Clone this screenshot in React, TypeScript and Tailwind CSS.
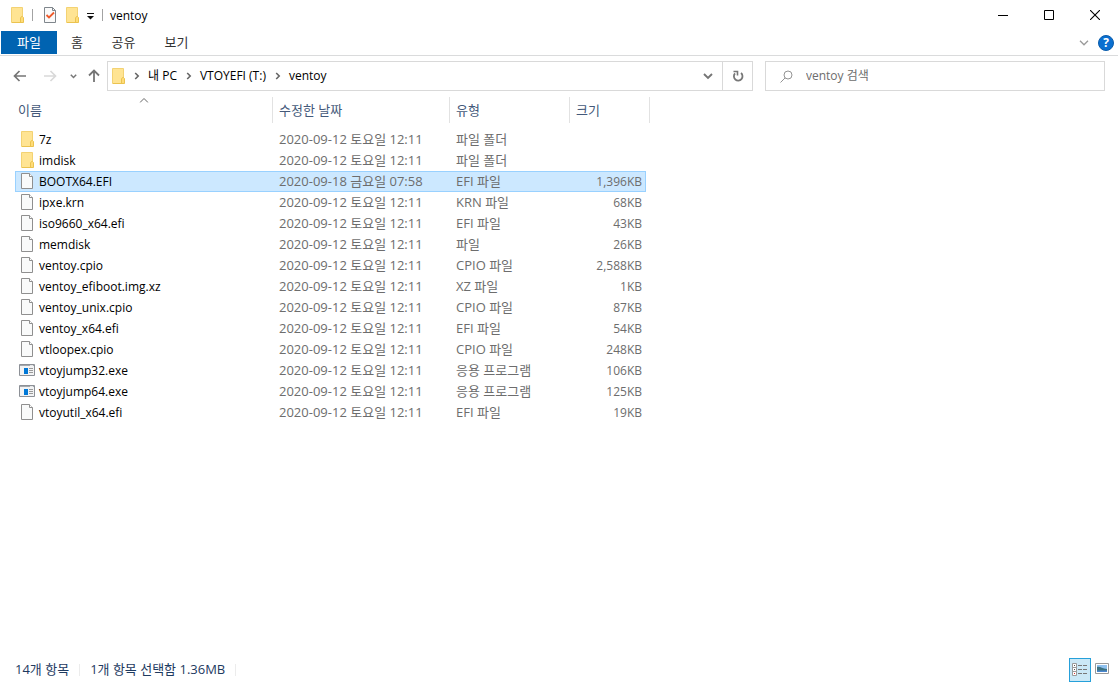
type FileKind = "folder" | "file" | "exe";

type Entry = {
  name: string;
  kind: FileKind;
  date: string;
  type: string;
  size?: string;
  selected?: boolean;
};

const DEFAULT_DATE = "2020-09-12 토요일 12:11";

const entries: Entry[] = [
  { name: "7z", kind: "folder", date: DEFAULT_DATE, type: "파일 폴더" },
  { name: "imdisk", kind: "folder", date: DEFAULT_DATE, type: "파일 폴더" },
  {
    name: "BOOTX64.EFI",
    kind: "file",
    date: "2020-09-18 금요일 07:58",
    type: "EFI 파일",
    size: "1,396KB",
    selected: true,
  },
  { name: "ipxe.krn", kind: "file", date: DEFAULT_DATE, type: "KRN 파일", size: "68KB" },
  { name: "iso9660_x64.efi", kind: "file", date: DEFAULT_DATE, type: "EFI 파일", size: "43KB" },
  { name: "memdisk", kind: "file", date: DEFAULT_DATE, type: "파일", size: "26KB" },
  { name: "ventoy.cpio", kind: "file", date: DEFAULT_DATE, type: "CPIO 파일", size: "2,588KB" },
  { name: "ventoy_efiboot.img.xz", kind: "file", date: DEFAULT_DATE, type: "XZ 파일", size: "1KB" },
  { name: "ventoy_unix.cpio", kind: "file", date: DEFAULT_DATE, type: "CPIO 파일", size: "87KB" },
  { name: "ventoy_x64.efi", kind: "file", date: DEFAULT_DATE, type: "EFI 파일", size: "54KB" },
  { name: "vtloopex.cpio", kind: "file", date: DEFAULT_DATE, type: "CPIO 파일", size: "248KB" },
  { name: "vtoyjump32.exe", kind: "exe", date: DEFAULT_DATE, type: "응용 프로그램", size: "106KB" },
  { name: "vtoyjump64.exe", kind: "exe", date: DEFAULT_DATE, type: "응용 프로그램", size: "125KB" },
  { name: "vtoyutil_x64.efi", kind: "file", date: DEFAULT_DATE, type: "EFI 파일", size: "19KB" },
];

function FolderIcon() {
  return (
    <svg width="16" height="16" viewBox="0 0 16 16" className="mb-px shrink-0" aria-hidden="true">
      <path d="M2.5 0.5h11v15h-11z" fill="#ffe493" stroke="#f3d273" />
      <path d="M3 15.5h11.5v-5l-1-1h-1l-1 1.5v4" fill="#ffdc78" stroke="#ebc34f" />
    </svg>
  );
}

function FileIcon() {
  return (
    <svg width="16" height="16" viewBox="0 0 16 16" className="mb-px shrink-0" aria-hidden="true">
      <path d="M2.5 0.5h8l3 3v12h-11z" fill="#f9fafa" stroke="#8f8f8f" />
      <path d="M10.5 0.5v3h3" fill="#fff" stroke="#8f8f8f" />
    </svg>
  );
}

function ExeIcon() {
  return (
    <svg width="16" height="16" viewBox="0 0 16 16" className="mb-px shrink-0" aria-hidden="true">
      <path d="M0.5 2.5h15v11H0.5z" fill="#f2f3f4" stroke="#8c9096" />
      <path d="M1 3h14v1H1z" fill="#a4a8ac" />
      <path d="M5 6h4v6H5z" fill="#0078d7" />
      <path d="M10 6.5h4M10 8.5h4M10 10.5h4" stroke="#9a9a9a" />
      <path d="M11 3.5h3" stroke="#e4e6e8" />
    </svg>
  );
}

function CheckDocIcon() {
  return (
    <svg width="16" height="16" viewBox="0 0 16 16" className="mb-px" aria-hidden="true">
      <path d="M2.5 0.5h8l3 3v12h-11z" fill="#fafafa" stroke="#7f868c" />
      <path d="M10.5 0.5v3h3" fill="none" stroke="#7f868c" />
      <path d="M4.5 8l2.5 2.5 5-5" fill="none" stroke="#ee5a2b" strokeWidth="1.8" />
    </svg>
  );
}

function EntryIcon({ kind }: { kind: FileKind }) {
  if (kind === "folder") return <FolderIcon />;
  if (kind === "exe") return <ExeIcon />;
  return <FileIcon />;
}

function Crumb({ label }: { label: string }) {
  return (
    <li className="flex items-center">
      <svg width="6" height="8" viewBox="0 0 6 8" className="mx-2" aria-hidden="true">
        <path d="M1.2 1l3 3-3 3" fill="none" stroke="#666" strokeWidth="1.6" />
      </svg>
      <button type="button">{label}</button>
    </li>
  );
}

function TitleBar() {
  const windowButton = "grid h-[30px] w-[46px] place-items-center self-start";

  return (
    <header className="flex h-[31px] shrink-0 items-center">
      <div className="flex items-center pl-[9px]">
        <FolderIcon />
        <span className="mb-px ml-[7px] h-3 w-px bg-[#a3a3a3]" />
        <button type="button" aria-label="속성" className="ml-[9px]">
          <CheckDocIcon />
        </button>
        <button type="button" aria-label="새 폴더" className="ml-[6px]">
          <FolderIcon />
        </button>
        <button type="button" aria-label="빠른 실행 도구 모음 사용자 지정" className="ml-[6px]">
          <svg width="9" height="8" viewBox="0 0 9 8" aria-hidden="true">
            <path d="M1 1.5h7" stroke="#111" />
            <path d="M1 4h7L4.5 7.5z" fill="#111" />
          </svg>
        </button>
        <span className="mb-px ml-[7px] h-3 w-px bg-[#a3a3a3]" />
      </div>
      <h1 className="ml-[7px] flex-1">ventoy</h1>
      <button type="button" aria-label="최소화" className={windowButton}>
        <svg width="10" height="10" viewBox="0 0 10 10" aria-hidden="true">
          <path d="M0 5.5h10" stroke="#000" />
        </svg>
      </button>
      <button type="button" aria-label="최대화" className={windowButton}>
        <svg width="10" height="10" viewBox="0 0 10 10" aria-hidden="true">
          <path d="M0.5 0.5h9v9h-9z" fill="none" stroke="#000" />
        </svg>
      </button>
      <button type="button" aria-label="닫기" className={windowButton}>
        <svg width="10" height="10" viewBox="0 0 10 10" aria-hidden="true">
          <path d="M0 0l10 10M10 0L0 10" stroke="#000" strokeWidth="1.1" />
        </svg>
      </button>
    </header>
  );
}

function Ribbon() {
  return (
    <nav className="flex h-[25px] shrink-0 items-start border-b border-[#dadbdc] pl-px text-[13px] text-[#333]">
      <button type="button" className="h-[23px] w-14 bg-[#0063b1] pb-0.5 text-white">
        파일
      </button>
      <button type="button" className="h-[23px] w-10 pb-0.5">
        홈
      </button>
      <button type="button" className="h-[23px] w-[53px] pb-0.5">
        공유
      </button>
      <button type="button" className="h-[23px] w-[53px] pb-0.5">
        보기
      </button>
      <div className="ml-auto flex h-6 items-center gap-[9px] pr-1">
        <button type="button" aria-label="리본 확장">
          <svg width="10" height="6" viewBox="0 0 10 6" aria-hidden="true">
            <path d="M1 0.8l4 4 4-4" fill="none" stroke="#9a9a9a" strokeWidth="1.3" />
          </svg>
        </button>
        <button
          type="button"
          aria-label="도움말"
          className="grid size-4 place-items-center rounded-full border border-[#0b5cab] bg-[#0a6fd0] text-[12px] leading-none font-bold text-white"
        >
          ?
        </button>
      </div>
    </nav>
  );
}

function AddressBar() {
  return (
    <div className="flex shrink-0 items-center px-[13px] pt-[5px]">
      <button type="button" aria-label="뒤로">
        <svg width="14" height="12" viewBox="0 0 14 12" aria-hidden="true">
          <path d="M6.5 1L1.5 6l5 5M1.5 6H13" fill="none" stroke="#757575" strokeWidth="1.7" />
        </svg>
      </button>
      <button type="button" aria-label="앞으로" className="ml-4">
        <svg width="14" height="12" viewBox="0 0 14 12" aria-hidden="true">
          <path d="M7.5 1l5 5-5 5M12.5 6H1" fill="none" stroke="#d9d9d9" strokeWidth="1.7" />
        </svg>
      </button>
      <button type="button" aria-label="최근 위치" className="ml-[13px]">
        <svg width="7" height="5" viewBox="0 0 7 5" aria-hidden="true">
          <path d="M0.8 0.8l2.7 2.7 2.7-2.7" fill="none" stroke="#777" strokeWidth="1.5" />
        </svg>
      </button>
      <button type="button" aria-label="위로" className="ml-[11px]">
        <svg width="12" height="14" viewBox="0 0 12 14" aria-hidden="true">
          <path d="M1 6.5l5-5 5 5M6 1.5V13" fill="none" stroke="#757575" strokeWidth="1.8" />
        </svg>
      </button>
      <div className="ml-[7px] flex h-[30px] flex-1 items-center border border-[#d9d9d9] pl-0.5">
        <FolderIcon />
        <ol className="flex flex-1 items-center gap-px">
          <Crumb label="내 PC" />
          <Crumb label="VTOYEFI (T:)" />
          <Crumb label="ventoy" />
        </ol>
        <button type="button" aria-label="이전 위치" className="grid h-full w-[29px] place-items-center">
          <svg width="10" height="7" viewBox="0 0 10 7" aria-hidden="true">
            <path d="M1 1l4 4 4-4" fill="none" stroke="#757575" strokeWidth="1.9" />
          </svg>
        </button>
        <button
          type="button"
          aria-label="새로 고침"
          className="grid h-full w-[30px] place-items-center border-l border-[#d9d9d9]"
        >
          <svg width="12" height="12" viewBox="0 0 12 12" aria-hidden="true">
            <path d="M9 3A4.3 4.3 0 1 1 3 3.4" fill="none" stroke="#777" strokeWidth="1.8" />
            <path d="M1.5 1.5h4v4" fill="none" stroke="#777" strokeWidth="1.6" />
          </svg>
        </button>
      </div>
      <div className="ml-3 flex h-[30px] w-[340px] items-center border border-[#d9d9d9] pl-3.5">
        <svg width="13" height="13" viewBox="0 0 13 13" className="shrink-0" aria-hidden="true">
          <circle cx="8" cy="5" r="4" fill="none" stroke="#949494" />
          <path d="M5.2 7.8L0.5 12.5" stroke="#949494" />
        </svg>
        <input
          type="search"
          aria-label="ventoy 검색"
          placeholder="ventoy 검색"
          className="ml-[13px] min-w-0 flex-1 outline-none placeholder:text-[#6d6d6d]"
        />
      </div>
    </div>
  );
}

function FileTable() {
  const cell = "h-[21px] border-y p-0";
  const detail = "pb-0.5 pl-[7px] text-[13px] leading-4";

  return (
    <table className="ml-[15px] w-[635px] table-fixed border-separate border-spacing-0 text-left">
      <colgroup>
        <col className="w-[257px]" />
        <col className="w-[177px]" />
        <col className="w-[120px]" />
        <col className="w-[77px]" />
        <col className="w-1" />
      </colgroup>
      <thead className="text-[13px] text-[#44597a]">
        <tr>
          <th className="relative p-0 pb-1.5 font-normal" aria-sort="ascending">
            <button type="button" className="flex h-[26px] w-full items-center pl-[3px]">
              이름
            </button>
            <svg
              width="9"
              height="5"
              viewBox="0 0 9 5"
              className="absolute top-px left-1/2 -translate-x-1/2"
              aria-hidden="true"
            >
              <path d="M0.5 4.5l4-4 4 4" fill="none" stroke="#666" />
            </svg>
          </th>
          {["수정한 날짜", "유형", "크기"].map((label) => (
            <th key={label} className="p-0 pb-1.5 font-normal">
              <button
                type="button"
                className="flex h-[26px] w-full items-center border-l border-[#e2e2e2] pl-1.5"
              >
                {label}
              </button>
            </th>
          ))}
          <td className="p-0 pb-1.5">
            <div className="h-[26px] border-r border-[#e2e2e2]" />
          </td>
        </tr>
      </thead>
      <tbody className="text-[#6d6d6d]">
        {entries.map((entry) => {
          const tone = entry.selected ? "border-[#99d1ff] bg-[#cce8ff]" : "border-transparent";
          return (
            <tr key={entry.name} aria-selected={entry.selected}>
              <td className={`${cell} ${tone} border-l pl-[3px] text-black`}>
                <div className="flex h-[19px] items-center gap-1">
                  <EntryIcon kind={entry.kind} />
                  {entry.name}
                </div>
              </td>
              <td className={`${cell} ${tone} ${detail}`}>{entry.date}</td>
              <td className={`${cell} ${tone} ${detail}`}>{entry.type}</td>
              <td className={`${cell} ${tone} border-r pr-[3px] text-right`}>{entry.size}</td>
            </tr>
          );
        })}
      </tbody>
    </table>
  );
}

function StatusBar() {
  return (
    <footer className="flex h-6 shrink-0 items-center pr-[5px] pl-[15px] text-[13px] text-[#1e3a5f]">
      <span className="pb-0.5">14개 항목</span>
      <span className="mx-[10px] h-3 w-px bg-[#ececec]" />
      <span className="pb-0.5">1개 항목 선택함 1.36MB</span>
      <span className="mx-[10px] h-3 w-px bg-[#ececec]" />
      <button
        type="button"
        aria-label="자세히"
        aria-pressed="true"
        className="ml-auto grid h-6 w-[22px] place-items-center border border-[#26a0da] bg-[#cbe8f6]"
      >
        <svg width="16" height="14" viewBox="0 0 16 14" aria-hidden="true">
          <path d="M0.5 0.5h4v4h-4zM0.5 4.5h4v4h-4zM0.5 8.5h4v4h-4z" fill="#fff" stroke="#999" />
          <path d="M6 2.5h4M11 2.5h4M6 6.5h4M11 6.5h4M6 10.5h4M11 10.5h4" stroke="#777" />
          <path d="M2 2h1v1H2zM2 6h1v1H2z" fill="#555" />
          <path d="M2 10h1v1H2z" fill="#d33" />
        </svg>
      </button>
      <button type="button" aria-label="큰 아이콘" className="mb-1 grid h-5 w-[22px] place-items-center">
        <svg width="14" height="11" viewBox="0 0 14 11" aria-hidden="true">
          <path d="M0.5 0.5h13v10H0.5z" fill="#fff" stroke="#999" />
          <path d="M2 2h10v7H2z" fill="#8fc1ef" />
          <path d="M2 4c3-1 5 2 10 2v2H2z" fill="#3d7280" />
          <path d="M2 7.5h10V9H2z" fill="#4a86cf" />
        </svg>
      </button>
    </footer>
  );
}

export default function App() {
  return (
    <div className="flex min-h-screen flex-col bg-white font-['Open_Sans','Noto_Sans_CJK_KR',sans-serif] text-[12px] leading-[18px] text-black">
      <TitleBar />
      <Ribbon />
      <AddressBar />
      <main className="flex-1 pt-1.5">
        <FileTable />
      </main>
      <StatusBar />
    </div>
  );
}
